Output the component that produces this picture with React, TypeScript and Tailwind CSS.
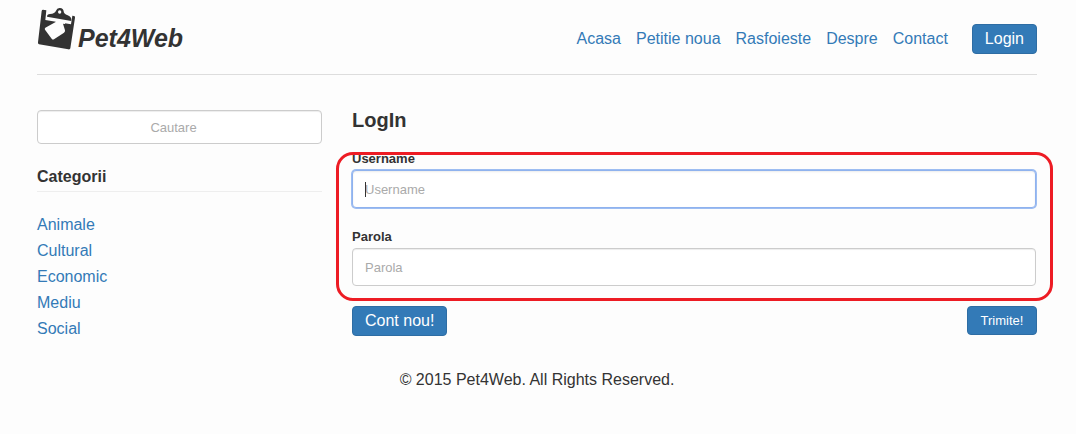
import React from "react";

const navItems = ["Acasa", "Petitie noua", "Rasfoieste", "Despre", "Contact"];
const categories = ["Animale", "Cultural", "Economic", "Mediu", "Social"];

function ClipboardLogo() {
  return (
    <svg viewBox="0 0 117 129" className="h-[43px] w-[39px] shrink-0" aria-hidden="true">
      <path
        d="M18 8 L28 10 L25 39 L102 52 L106 26 L111 27 Q115 28 114 32 L100 124 Q99 128 94 127 L6 112 Q2 111 3 106 L14 12 Q15 8 18 8 Z"
        fill="#333333"
      />
      <path
        d="M30 29 Q30 22 39 21 Q54 20 57 11 Q60 2 69 3 Q79 4 80 13 Q80 21 92 25 Q105 30 103 42 Z"
        fill="#333333"
      />
      <circle cx="68" cy="15" r="5" fill="#fdfdfd" />
      <path
        d="M56 38 L86 43 L84 51 L78 50 L84 70 Q85 74 81 77 L51 97 Q47 99 44 95 L24 68 Q22 65 25 62 L56 45 Z"
        fill="#fdfdfd"
      />
    </svg>
  );
}

const buttonBase = "rounded border border-[#2e6da4] bg-[#337ab7] px-3 text-white";
const fieldBase =
  "block w-full rounded border bg-white px-3 text-[13px] text-[#555555] placeholder:text-[#aaaaaa] outline-none";

export default function App() {
  return (
    <div className="min-h-screen bg-[#fdfdfd] pr-[39px] pl-[37px] font-['Liberation_Sans',Arial,sans-serif] text-base text-[#333333]">
      <header className="flex items-start justify-between border-b border-[#dddddd] pt-[7px] pb-5">
        <a href="#" className="flex items-start gap-[2px] text-[#333333]">
          <ClipboardLogo />
          <span className="pt-4 text-[25px] leading-[30px] font-bold italic">Pet4Web</span>
        </a>
        <nav className="flex items-center gap-[15px] pt-[17px]">
          {navItems.map((item) => (
            <a key={item} href="#" className="text-[#337ab7]">
              {item}
            </a>
          ))}
          <button type="button" className={`${buttonBase} ml-[9px] h-[30px]`}>
            Login
          </button>
        </nav>
      </header>

      <div className="flex gap-[30px] pt-[30px]">
        <aside className="w-[285px] shrink-0 pt-[5px]">
          <input
            type="text"
            aria-label="Cautare"
            placeholder="Cautare"
            className={`${fieldBase} h-[34px] border-[#cccccc] pr-6 text-center shadow-[inset_0_1px_1px_rgba(0,0,0,0.075)]`}
          />
          <h2 className="mt-[21px] border-b border-[#eeeeee] pb-[2px] font-bold">Categorii</h2>
          <ul className="mt-5 leading-[26px]">
            {categories.map((category) => (
              <li key={category}>
                <a href="#" className="text-[#337ab7]">
                  {category}
                </a>
              </li>
            ))}
          </ul>
        </aside>

        <main className="min-w-0 flex-1">
          <h1 className="text-xl leading-[30px] font-bold">LogIn</h1>
          <form className="mt-[15px]" onSubmit={(event) => event.preventDefault()}>
            <div className="relative pr-px">
              <label htmlFor="username" className="block pb-[2px] text-[13px] leading-[18px] font-bold">
                Username
              </label>
              <div className="relative">
                <input
                  id="username"
                  type="text"
                  placeholder="Username"
                  className={`${fieldBase} h-[38px] border-[#8fb2ee] shadow-[0_0_0_1px_#9dbdf2,inset_0_1px_2px_rgba(0,0,0,0.08)]`}
                />
                <span className="absolute top-3 left-[13px] h-[15px] w-px bg-[#333333]" />
              </div>
              <label htmlFor="parola" className="mt-5 block pb-[2px] text-[13px] leading-[18px] font-bold">
                Parola
              </label>
              <input
                id="parola"
                type="password"
                placeholder="Parola"
                className={`${fieldBase} h-[38px] border-[#cccccc] shadow-[inset_0_1px_1px_rgba(0,0,0,0.075)]`}
              />
              <div className="pointer-events-none absolute top-[2px] -right-4 -bottom-[15px] -left-4 rounded-[17px] border-[3px] border-[#ed1c24]" />
            </div>
            <div className="mt-5 flex items-start justify-between">
              <button type="button" className={`${buttonBase} h-[30px]`}>
                Cont nou!
              </button>
              <button type="submit" className={`${buttonBase} h-[29px] min-w-[70px] text-[13px]`}>
                Trimite!
              </button>
            </div>
          </form>
        </main>
      </div>

      <footer className="pt-[26px] pb-8 text-center">© 2015 Pet4Web. All Rights Reserved.</footer>
    </div>
  );
}
